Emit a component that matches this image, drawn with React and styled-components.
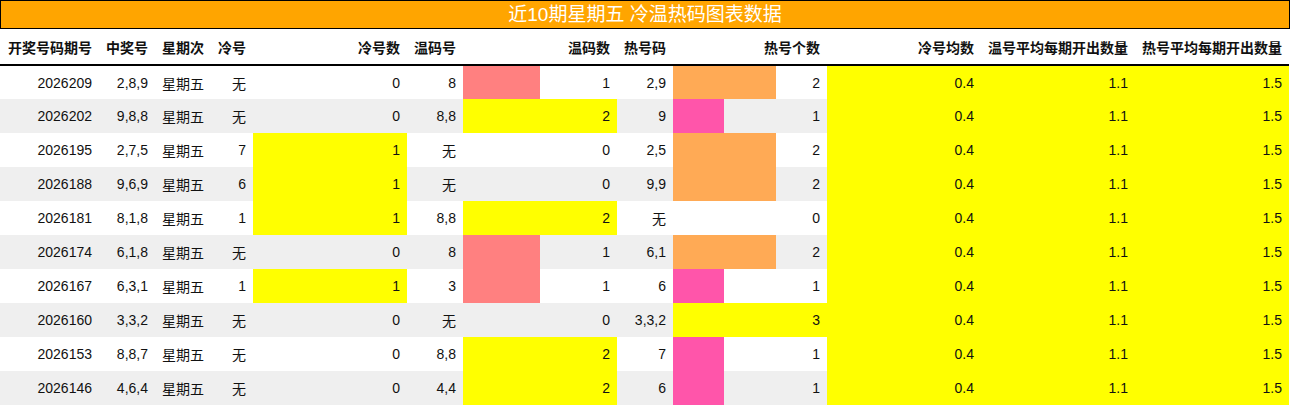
import React from "react";
import styled, { createGlobalStyle } from "styled-components";

const Global = createGlobalStyle`
  html, body { margin: 0; padding: 0; background: #fff; }
  body { font-family: "Liberation Sans", "Noto Sans CJK SC", sans-serif; }
`;

const Page = styled.div`
  width: 1290px;
`;

const Title = styled.div`
  box-sizing: border-box;
  height: 29px;
  border: 1px solid #000;
  background: #ffa500;
  color: #fff;
  font-size: 19px;
  line-height: 27px;
  text-align: center;
`;

const Table = styled.table`
  border-collapse: collapse;
  table-layout: fixed;
  width: 1289px;
  font-size: 14px;
  color: #111;
`;

const HeadRow = styled.tr`
  height: 36px;
  border-bottom: 2px solid #000;
`;

const Th = styled.th`
  padding: 0 7px;
  text-align: right;
  font-weight: bold;
  white-space: nowrap;
  color: #111;
`;

const Row = styled.tr`
  height: 34px;
  background: ${(p) => (p.$alt ? "#efefef" : "#ffffff")};
`;

const Td = styled.td`
  padding: 0 7px;
  text-align: ${(p) => (p.$center ? "center" : "right")};
  white-space: nowrap;
`;

const BarTd = styled(Td)`
  background: ${(p) =>
    p.$pct > 0
      ? `linear-gradient(to right, ${p.$color} 0, ${p.$color} ${p.$pct}%, transparent ${p.$pct}%)`
      : "transparent"};
`;

const AvgTd = styled(Td)`
  background: #ffff00;
`;

const cols = [99, 56, 56, 42, 154, 56, 154, 56, 154, 154, 154, 154];

const headers = [
  "开奖号码期号",
  "中奖号",
  "星期次",
  "冷号",
  "冷号数",
  "温码号",
  "温码数",
  "热号码",
  "热号个数",
  "冷号均数",
  "温号平均每期开出数量",
  "热号平均每期开出数量",
];

const rows = [
  ["2026209", "2,8,9", "无", 0, "8", 1, "2,9", 2],
  ["2026202", "9,8,8", "无", 0, "8,8", 2, "9", 1],
  ["2026195", "2,7,5", "7", 1, "无", 0, "2,5", 2],
  ["2026188", "9,6,9", "6", 1, "无", 0, "9,9", 2],
  ["2026181", "8,1,8", "1", 1, "8,8", 2, "无", 0],
  ["2026174", "6,1,8", "无", 0, "8", 1, "6,1", 2],
  ["2026167", "6,3,1", "1", 1, "3", 1, "6", 1],
  ["2026160", "3,3,2", "无", 0, "无", 0, "3,3,2", 3],
  ["2026153", "8,8,7", "无", 0, "8,8", 2, "7", 1],
  ["2026146", "4,6,4", "无", 0, "4,4", 2, "6", 1],
];

const coldColor = () => "#ffff00";
const warmColor = (v) => (v >= 2 ? "#ffff00" : "#ff8080");
const hotColor = (v) => (v >= 3 ? "#ffff00" : v === 2 ? "#ffaa55" : "#ff55aa");

export default function App() {
  return (
    <Page>
      <Global />
      <Title>近10期星期五 冷温热码图表数据</Title>
      <Table>
        <colgroup>
          {cols.map((w, i) => (
            <col key={i} style={{ width: w }} />
          ))}
        </colgroup>
        <thead>
          <HeadRow>
            {headers.map((h) => (
              <Th key={h}>{h}</Th>
            ))}
          </HeadRow>
        </thead>
        <tbody>
          {rows.map((r, i) => (
            <Row key={r[0]} $alt={i % 2 === 1}>
              <Td>{r[0]}</Td>
              <Td>{r[1]}</Td>
              <Td $center>星期五</Td>
              <Td>{r[2]}</Td>
              <BarTd $pct={(r[3] / 1) * 100} $color={coldColor(r[3])}>
                {r[3]}
              </BarTd>
              <Td>{r[4]}</Td>
              <BarTd $pct={(r[5] / 2) * 100} $color={warmColor(r[5])}>
                {r[5]}
              </BarTd>
              <Td>{r[6]}</Td>
              <BarTd $pct={(r[7] / 3) * 100} $color={hotColor(r[7])}>
                {r[7]}
              </BarTd>
              <AvgTd>0.4</AvgTd>
              <AvgTd>1.1</AvgTd>
              <AvgTd>1.5</AvgTd>
            </Row>
          ))}
        </tbody>
      </Table>
    </Page>
  );
}
